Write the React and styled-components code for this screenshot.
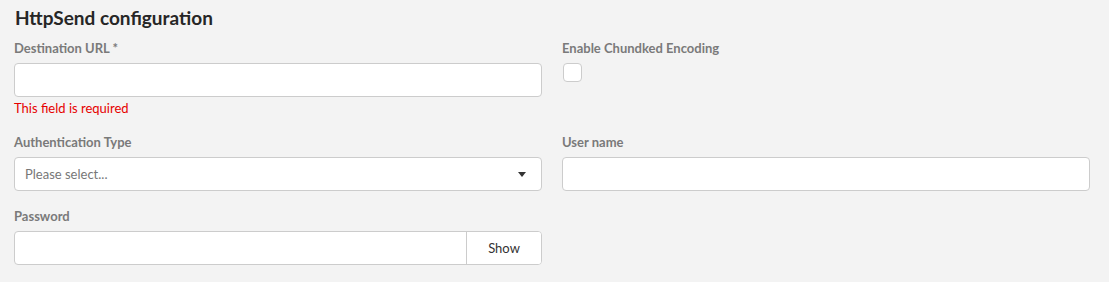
import React, { useState } from 'react'
import styled, { createGlobalStyle } from 'styled-components'

const GlobalStyle = createGlobalStyle`
  html, body {
    margin: 0;
    padding: 0;
    background: #f3f3f3;
  }
  body {
    font-family: Lato, "Noto Sans", sans-serif;
    color: #333333;
  }
`

const Panel = styled.div`
  width: 1109px;
  height: 282px;
  box-sizing: border-box;
  padding: 6px 20px 0 14px;
  background: #f3f3f3;
`

const Title = styled.h2`
  margin: 0 0 0 1px;
  font-size: 19px;
  font-weight: 700;
  line-height: 24px;
  color: #262626;
`

const Grid = styled.div`
  display: grid;
  grid-template-columns: 528px 528px;
  column-gap: 20px;
  margin-top: 10px;
`

const Field = styled.div`
  display: flex;
  flex-direction: column;
  min-height: ${p => p.$tall ? '94px' : '74px'};
`

const Label = styled.label`
  font-size: 13px;
  font-weight: 700;
  color: #7a7a7a;
  line-height: 16px;
  margin-bottom: 7px;
`

const TextInput = styled.input`
  box-sizing: border-box;
  width: 100%;
  height: 34px;
  border: 1px solid #cccccc;
  border-radius: 4px;
  background: #ffffff;
  padding: 0 10px;
  font-family: inherit;
  font-size: 13px;
  outline: none;
`

const ErrorText = styled.div`
  margin-top: 3px;
  font-size: 13px;
  color: #e60000;
  line-height: 16px;
`

const Checkbox = styled.div`
  width: 19px;
  height: 19px;
  box-sizing: border-box;
  border: 1px solid #cccccc;
  border-radius: 4px;
  background: #ffffff;
  margin-left: 1px;
`

const SelectBox = styled.div`
  box-sizing: border-box;
  height: 34px;
  border: 1px solid #cccccc;
  border-radius: 4px;
  background: #ffffff;
  display: flex;
  align-items: center;
  justify-content: space-between;
  padding: 0 15px 0 10px;
  font-size: 13px;
  color: #777777;
`

const Arrow = styled.span`
  width: 0;
  height: 0;
  border-left: 4px solid transparent;
  border-right: 4px solid transparent;
  border-top: 5px solid #333333;
`

const InputGroup = styled.div`
  display: flex;
  height: 34px;
  box-sizing: border-box;
  border: 1px solid #cccccc;
  border-radius: 4px;
  background: #ffffff;
  overflow: hidden;
`

const GroupInput = styled.input`
  flex: 1;
  border: none;
  outline: none;
  padding: 0 10px;
  font-family: inherit;
  font-size: 13px;
  background: transparent;
`

const ShowButton = styled.button`
  width: 75px;
  border: none;
  border-left: 1px solid #cccccc;
  background: #ffffff;
  font-family: inherit;
  font-size: 13px;
  color: #333333;
  cursor: pointer;
`

export default function App() {
  const [shown, setShown] = useState(false)
  return (
    <>
      <GlobalStyle />
      <Panel>
        <Title>HttpSend configuration</Title>
        <Grid>
          <Field $tall>
            <Label>Destination URL *</Label>
            <TextInput type="text" />
            <ErrorText>This field is required</ErrorText>
          </Field>
          <Field $tall>
            <Label>Enable Chundked Encoding</Label>
            <Checkbox />
          </Field>
          <Field>
            <Label>Authentication Type</Label>
            <SelectBox>
              <span>Please select...</span>
              <Arrow />
            </SelectBox>
          </Field>
          <Field>
            <Label>User name</Label>
            <TextInput type="text" />
          </Field>
          <Field>
            <Label>Password</Label>
            <InputGroup>
              <GroupInput type={shown ? 'text' : 'password'} />
              <ShowButton onClick={() => setShown(!shown)}>{shown ? 'Hide' : 'Show'}</ShowButton>
            </InputGroup>
          </Field>
        </Grid>
      </Panel>
    </>
  )
}
